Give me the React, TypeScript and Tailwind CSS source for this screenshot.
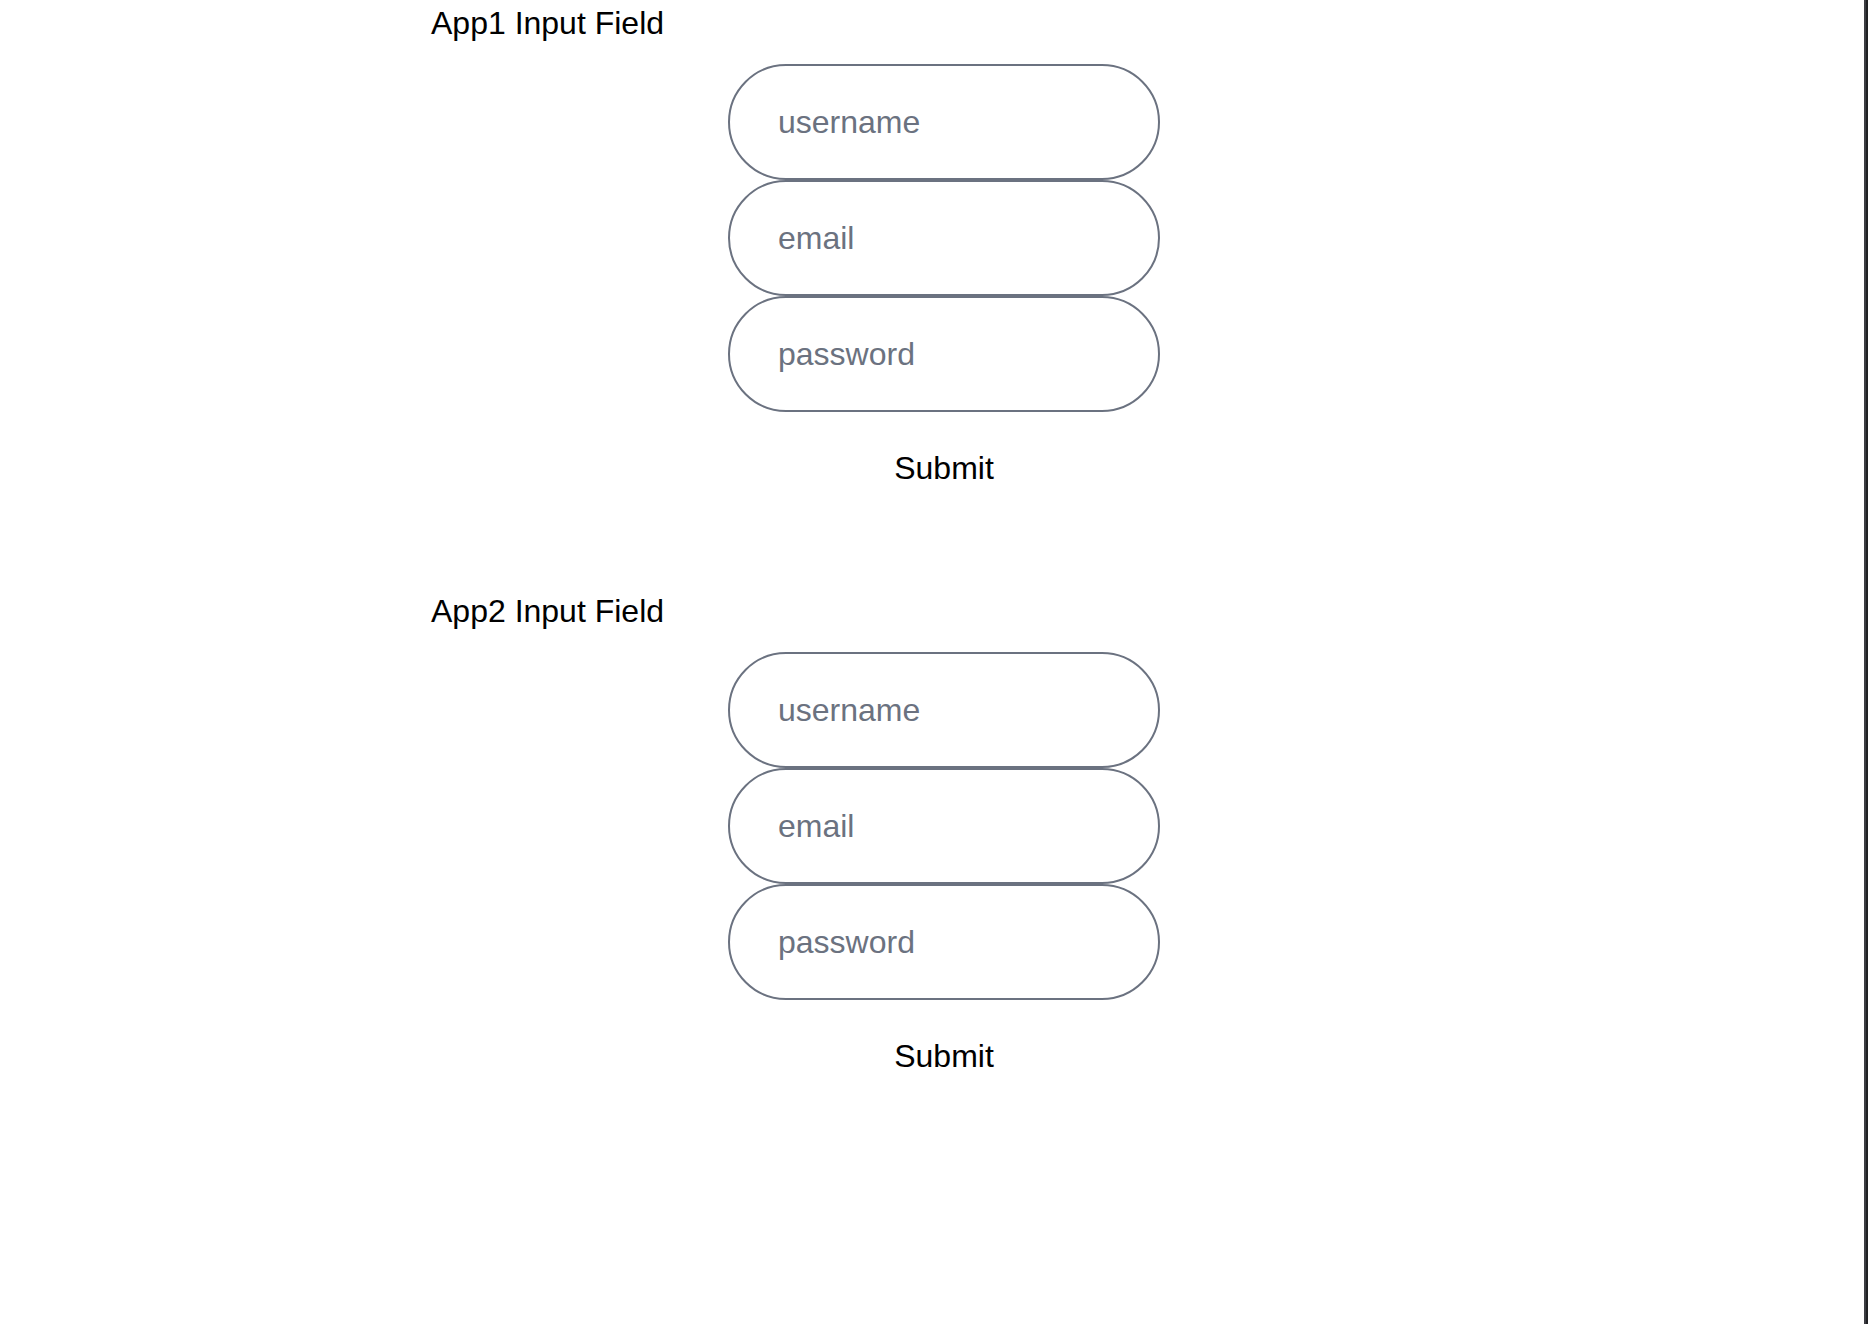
import React from "react";

function Section({ n }: { n: number }) {
  return (
    <section className="w-[1026px]">
      <h2 className="text-[32px] leading-[46px] font-normal text-black">App{n} Input Field</h2>
      <div className="mt-[18px] flex flex-col items-center">
        <input
          type="text"
          placeholder="username"
          className="w-[432px] h-[116px] rounded-full border-2 border-[#6b7280] pl-12 text-[32px] text-[#6b7280] placeholder:text-[#6b7280] outline-none bg-white"
        />
        <input
          type="email"
          placeholder="email"
          className="w-[432px] h-[116px] rounded-full border-2 border-[#6b7280] pl-12 text-[32px] text-[#6b7280] placeholder:text-[#6b7280] outline-none bg-white"
        />
        <input
          type="password"
          placeholder="password"
          className="w-[432px] h-[116px] rounded-full border-2 border-[#6b7280] pl-12 text-[32px] text-[#6b7280] placeholder:text-[#6b7280] outline-none bg-white"
        />
        <button className="mt-8 text-[32px] leading-[48px] text-black bg-transparent">Submit</button>
      </div>
    </section>
  );
}

export default function App() {
  return (
    <div
      className="flex min-h-[1324px] bg-white"
      style={{ fontFamily: '"Liberation Sans", Arial, Helvetica, sans-serif' }}
    >
      <main className="flex-1 pl-[431px]">
        <div className="flex flex-col gap-[96px]">
          <Section n={1} />
          <Section n={2} />
        </div>
      </main>
      <div className="flex w-[4px] shrink-0">
        <div className="w-[2px] bg-[#3c3d42]" />
        <div className="w-[2px] bg-[#202124]" />
      </div>
    </div>
  );
}
